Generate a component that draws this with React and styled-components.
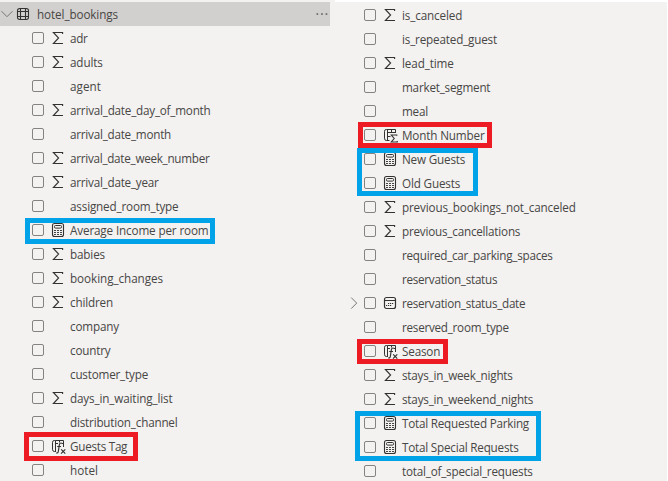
import React, { useLayoutEffect, useRef } from 'react';
import styled, { createGlobalStyle } from 'styled-components';

const Global = createGlobalStyle`
  * { box-sizing: border-box; }
  html, body { margin: 0; background: #fff; overflow: hidden; }
`;

const Page = styled.main`
  position: relative;
  display: flex;
  width: 668px;
  height: 481px;
  overflow: hidden;
  background: #f3f2f1;
  color: #484644;
  font-family: 'Open Sans', 'Noto Sans', sans-serif;
  font-size: 11.7px;
`;

const LeftPane = styled.section`
  width: 335px;
  padding-top: 2px;
`;

const RightPane = styled.section`
  width: 332px;
  border-top: 2px solid #fff;
  padding-top: 1px;
`;

const Edge = styled.div`
  width: 1px;
  background: #fff;
`;

const Header = styled.header`
  display: flex;
  align-items: center;
  width: 330px;
  height: 24px;
  padding-right: 2px;
  background: #d2d0ce;
`;

const HeaderLabel = styled.div`
  flex: 1;
  display: flex;
  padding-left: 5px;
`;

const Row = styled.div`
  display: flex;
  align-items: center;
  height: 24px;
  padding-left: ${(p) => p.$indent}px;
`;

const Twisty = styled.span`
  display: flex;
  width: 14px;
  height: 14px;
`;

const Check = styled.span`
  width: 12px;
  height: 12px;
  border: 1px solid #858381;
  border-radius: 2px;
`;

const IconSlot = styled.span`
  display: flex;
  width: 18px;
  height: 16px;
  margin-left: 7px;
  svg { overflow: visible; }
`;

const Label = styled.span`
  display: block;
  margin-left: 1px;
  line-height: 16px;
  white-space: pre;
`;

const Frame = styled.div`
  position: absolute;
  left: ${(p) => p.$x}px;
  top: ${(p) => p.$y}px;
  width: ${(p) => p.$w}px;
  height: ${(p) => p.$h}px;
  border: 5px solid ${(p) => (p.$tone === 'red' ? '#ed1c24' : '#00a2e8')};
`;

/* Tracks the label so that its text spans the given width. */
function FittedLabel({ text, width }) {
  const ref = useRef(null);
  useLayoutEffect(() => {
    const fit = () => {
      const el = ref.current;
      if (!el) return;
      el.style.letterSpacing = '0px';
      const range = document.createRange();
      range.selectNodeContents(el);
      const natural = range.getBoundingClientRect().width;
      el.style.letterSpacing = `${(width - natural) / text.length}px`;
    };
    fit();
    document.fonts.ready.then(fit);
  }, [text, width]);
  return <Label ref={ref}>{text}</Label>;
}

const INK = '#333231';

const Svg = ({ children, w = 16 }) => (
  <svg width={w} height="16" viewBox={`0 0 ${w} 16`} fill="none" stroke={INK} strokeWidth="1">
    {children}
  </svg>
);

const Sigma = () => (
  <Svg><path d="M11.6 4V2.5H2.4L7.6 8 2.4 13.5H12" strokeWidth="1.1" /></Svg>
);

const Calculator = () => (
  <Svg>
    <rect x="1.5" y="1.5" width="11" height="13" rx="2" strokeWidth="1.1" />
    <rect x="3.5" y="3.5" width="7" height="2.6" rx="1" />
    <g fill={INK} stroke="none">
      {[3.1, 6.1, 9.1].map((x) => [8, 10, 12].map((y) => (
        <rect key={`${x}-${y}`} x={x} y={y} width="1.8" height="1" />
      )))}
    </g>
  </Svg>
);

const ColumnFx = () => (
  <Svg>
    <path d="M4.5 2.5H3.3Q1.5 2.5 1.5 4.3V11.2Q1.5 13.5 3.3 13.5H5M4.5 2.5V13.5M4.5 2.5H12.5V9M4.5 5.5H7M8.5 2.5V4.5M12.5 5.5H10.5" />
    <path d="M10.6 5.1Q8.6 4.6 8.3 7L7.4 13.2Q7 15.5 5.2 14.9M6.2 8.5H10" strokeWidth="1.15" />
    <path d="M10.2 11.3L14.3 15.6M14.3 11.3L10 15.6" strokeWidth="1.15" />
  </Svg>
);

const ColumnSigma = () => (
  <Svg>
    <path d="M12.5 6V2.5H3.3Q1.5 2.5 1.5 4.3V11.2Q1.5 13.5 3.3 13.5H6.5M4.5 2.5V13.5M4.5 5.5H12.5M4.5 9.5H7.5M8.5 2.5V5.5" />
    <path d="M13.8 8.8V8H8.3L11.2 11.5 8.3 15H14.3V14" strokeWidth="1.15" />
  </Svg>
);

const Calendar = () => (
  <Svg>
    <rect x="1.5" y="2.5" width="11" height="11" rx="2" strokeWidth="1.2" />
    <path d="M1.5 5.5H12.5" />
    <g fill={INK} stroke="none">
      {[[5, 8], [7, 8], [9, 8], [3, 10], [5, 10], [7, 10]].map(([x, y]) => (
        <rect key={`${x}-${y}`} x={x} y={y} width="1.2" height="1" />
      ))}
    </g>
  </Svg>
);

const TableIcon = () => (
  <svg width="15" height="14" viewBox="0 0 15 14" fill="none" stroke={INK} strokeWidth="1.1">
    <rect x="1.5" y="1.5" width="11" height="11" rx="2.2" />
    <path d="M4.5 1.5V12.5M9.5 1.5V12.5M1.5 4.5H12.5M1.5 9.5H12.5" />
  </svg>
);

const ChevronDown = () => (
  <svg width="16" height="14" viewBox="0 0 16 14" fill="none" stroke="#777573">
    <path d="M1.5 4.2L7 9.7 12.5 4.2" />
  </svg>
);

const ChevronRight = () => (
  <svg width="14" height="14" viewBox="0 0 14 14" fill="none" stroke="#777573">
    <path d="M1.2 1.6L6.7 7.1 1.2 12.6" />
  </svg>
);

const Dots = () => (
  <svg width="14" height="4" viewBox="0 0 14 4" fill="#6b6967">
    <rect x="2.5" y="1.2" width="1.7" height="1.7" />
    <rect x="7.1" y="1.2" width="1.7" height="1.7" />
    <rect x="11.6" y="1.2" width="1.7" height="1.7" />
  </svg>
);

const icons = { sum: Sigma, calc: Calculator, fx: ColumnFx, colsum: ColumnSigma, date: Calendar };

const leftFields = [
  ['adr', 17.5, 'sum'],
  ['adults', 32.7, 'sum'],
  ['agent', 31],
  ['arrival_date_day_of_month', 140.5, 'sum'],
  ['arrival_date_month', 101],
  ['arrival_date_week_number', 139.5, 'sum'],
  ['arrival_date_year', 88.5, 'sum'],
  ['assigned_room_type', 108.5],
  ['Average Income per room', 138.5, 'calc'],
  ['babies', 35, 'sum'],
  ['booking_changes', 93, 'sum'],
  ['children', 43, 'sum'],
  ['company', 49],
  ['country', 40.5],
  ['customer_type', 78],
  ['days_in_waiting_list', 102.5, 'sum'],
  ['distribution_channel', 107.5],
  ['Guests Tag', 57.2, 'fx'],
  ['hotel', 28],
];

const rightFields = [
  ['is_canceled', 60.2, 'sum'],
  ['is_repeated_guest', 95],
  ['lead_time', 51.7, 'sum'],
  ['market_segment', 88.3],
  ['meal', 26],
  ['Month Number', 82.5, 'colsum'],
  ['New Guests', 63.2, 'calc'],
  ['Old Guests', 58.2, 'calc'],
  ['previous_bookings_not_canceled', 173.7, 'sum'],
  ['previous_cancellations', 118.2, 'sum'],
  ['required_car_parking_spaces', 150.7],
  ['reservation_status', 95.2],
  ['reservation_status_date', 123.3, 'date', true],
  ['reserved_room_type', 106.8],
  ['Season', 38.2, 'fx'],
  ['stays_in_week_nights', 110.7, 'sum'],
  ['stays_in_weekend_nights', 131.2, 'sum'],
  ['Total Requested Parking', 127, 'calc'],
  ['Total Special Requests', 116.6, 'calc'],
  ['total_of_special_requests', 130.7],
];

const frames = [
  { tone: 'blue', x: 25, y: 218, w: 190, h: 26 },
  { tone: 'red', x: 24, y: 432, w: 114, h: 29 },
  { tone: 'red', x: 358, y: 122, w: 134, h: 26 },
  { tone: 'blue', x: 357, y: 148, w: 121, h: 48 },
  { tone: 'red', x: 357, y: 339, w: 91, h: 25 },
  { tone: 'blue', x: 355, y: 411, w: 186, h: 50 },
];

function Field({ field: [name, width, kind, expandable], indent }) {
  const Icon = icons[kind];
  return (
    <Row $indent={indent}>
      <Twisty>{expandable && <ChevronRight />}</Twisty>
      <Check />
      <IconSlot>{Icon && <Icon />}</IconSlot>
      <FittedLabel text={name} width={width} />
    </Row>
  );
}

export default function App() {
  return (
    <>
      <Global />
      <Page>
        <LeftPane>
          <Header>
            <ChevronDown />
            <TableIcon />
            <HeaderLabel><FittedLabel text="hotel_bookings" width={81} /></HeaderLabel>
            <Dots />
          </Header>
          {leftFields.map((f) => <Field key={f[0]} field={f} indent={18} />)}
        </LeftPane>
        <RightPane>
          {rightFields.map((f) => <Field key={f[0]} field={f} indent={15} />)}
        </RightPane>
        <Edge />
        {frames.map((f) => (
          <Frame key={`${f.x}-${f.y}`} $tone={f.tone} $x={f.x} $y={f.y} $w={f.w} $h={f.h} />
        ))}
      </Page>
    </>
  );
}
